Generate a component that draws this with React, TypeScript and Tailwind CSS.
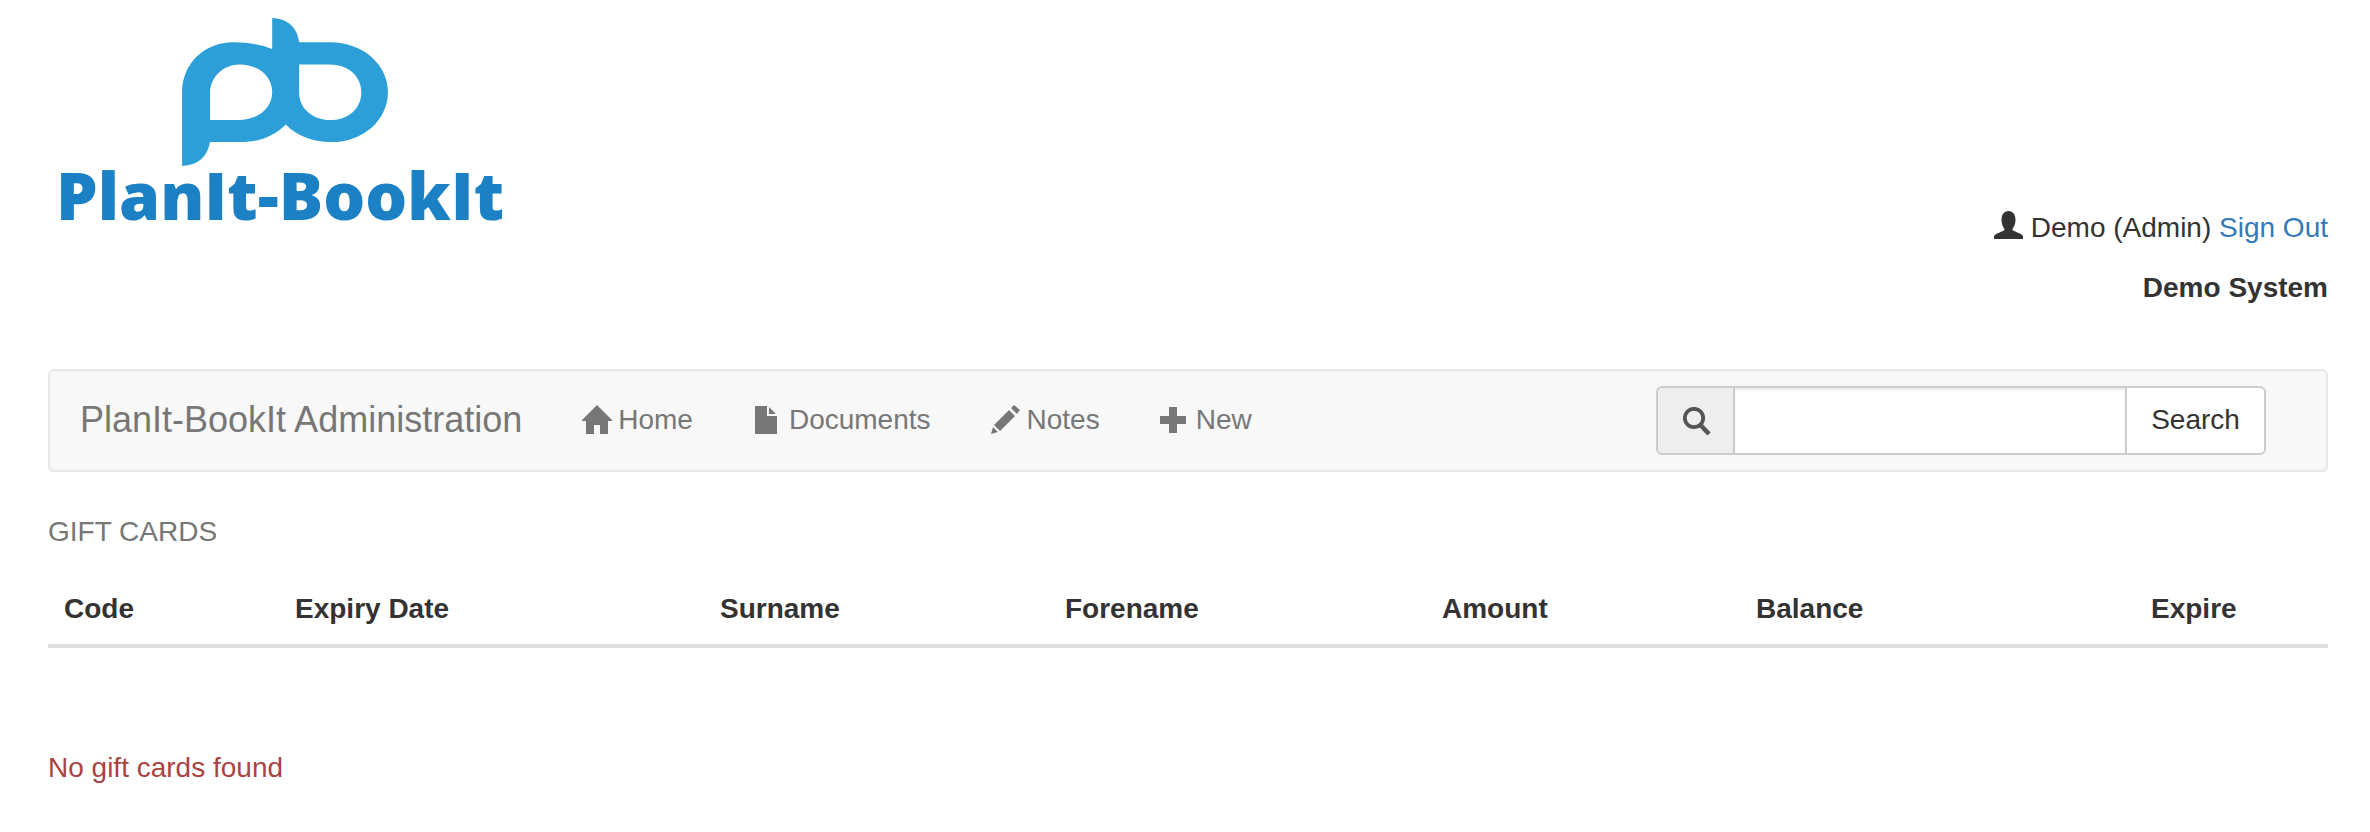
import React from "react";

const font = "font-['Liberation_Sans',Arial,sans-serif]";

function LogoMark() {
  return (
    <svg viewBox="456 55 619 445" className="block w-[206px] h-[148px]">
      <path
        fill="#2c9fd9"
        fillRule="evenodd"
        d="M727 55C775 57 803 85 808 128L900 128C1000 128 1075 195 1075 278C1075 362 1000 428 905 428C850 428 800 408 768 375C735 408 690 428 635 428L540 428C532 472 505 498 456 500L456 280C456 190 525 128 610 128C655 128 695 135 727 148ZM540 362L625 362C685 362 727 325 727 278C727 230 685 195 630 195C580 195 540 232 540 282ZM808 195L808 280C808 328 850 362 900 362C955 362 995 328 995 278C995 230 955 195 900 195Z"
      />
    </svg>
  );
}

function Logo() {
  return (
    <div className="flex flex-col items-start">
      <div className="ml-[134px] mt-[18px]">
        <LogoMark />
      </div>
      <div className="ml-[8px] -mt-[3px] h-[62px] text-[#1c80c4] text-[66px] leading-[62px] font-extrabold font-['Open_Sans',sans-serif] whitespace-nowrap">
        PlanIt-BookIt
      </div>
    </div>
  );
}

function UserIcon() {
  return (
    <svg viewBox="0 0 29 28" className="w-[29px] h-[28px] fill-[#333] inline-block align-[-2px]">
      <path d="M14.500 0C19 0 21.500 3.500 21.500 9C21.500 13 20 16 18.500 18L18.500 19C21 21 27 22 29 25L29 28L0 28L0 25C2 22 8 21 10.500 19L10.500 18C9 16 7.500 13 7.500 9C7.500 3.500 10 0 14.500 0Z" />
    </svg>
  );
}

function HomeIcon() {
  return (
    <svg viewBox="0 0 30 29" className="w-[30px] h-[29px] fill-[#777]">
      <path d="M15 0L30 15L30 16L26 16L26 29L18 29L18 20L12 20L12 29L4 29L4 16L0 16L0 15Z" />
    </svg>
  );
}

function DocIcon() {
  return (
    <svg viewBox="0 0 22 28" className="w-[22px] h-[28px] fill-[#777]">
      <path d="M0 0L12 0L12 10L22 10L22 28L0 28ZM14 1L21 8L14 8Z" />
    </svg>
  );
}

function PencilIcon() {
  return (
    <svg viewBox="0 0 29 29" className="w-[29px] h-[29px] fill-[#777]">
      <path d="M0 29L2 22L7 27ZM3 20L18 5L24 11L9 26ZM20 3L23 0L29 5L26 9Z" />
    </svg>
  );
}

function PlusIcon() {
  return (
    <svg viewBox="0 0 26 26" className="w-[26px] h-[26px] fill-[#777]">
      <path d="M9 0L17 0L17 9L26 9L26 17L17 17L17 26L9 26L9 17L0 17L0 9L9 9Z" />
    </svg>
  );
}

function SearchIcon() {
  return (
    <svg viewBox="0 0 28 28" className="w-[28px] h-[28px] ml-[3px]">
      <circle cx="11" cy="11" r="9.200" fill="none" stroke="#555" strokeWidth="3.800" />
      <path d="M17.500 18L26 27" stroke="#555" strokeWidth="4.500" />
    </svg>
  );
}

const navItems = [
  { label: "Home", icon: <HomeIcon />, gap: "gap-[6px] mr-[2px]" },
  { label: "Documents", icon: <DocIcon />, gap: "gap-[12px]" },
  { label: "Notes", icon: <PencilIcon />, gap: "gap-[7px]" },
  { label: "New", icon: <PlusIcon />, gap: "gap-[10px]" },
];

const columns = [
  { label: "Code", width: "w-[231px]" },
  { label: "Expiry Date", width: "w-[425px]" },
  { label: "Surname", width: "w-[345px]" },
  { label: "Forename", width: "w-[377px]" },
  { label: "Amount", width: "w-[314px]" },
  { label: "Balance", width: "w-[395px]" },
  { label: "Expire", width: "" },
];

export default function App() {
  return (
    <div className={`${font} bg-white h-[832px] pl-[48px] pr-[42px] text-[28px] text-[#333] overflow-hidden`}>
      <header className="flex justify-between h-[369px]">
        <Logo />
        <div className="flex flex-col items-end pt-[208px]">
          <div className="h-[40px] leading-[40px] whitespace-nowrap">
            <UserIcon /> Demo (Admin) <a className="text-[#337ab7]">Sign Out</a>
          </div>
          <div className="mt-[20px] h-[40px] leading-[40px] font-bold">Demo System</div>
        </div>
      </header>

      <nav className="flex items-center justify-between h-[103px] bg-[#f8f8f8] border-2 border-[#e7e7e7] rounded-[6px] pl-[30px] pr-[60px]">
        <div className="flex items-center pb-[2px]">
          <span className="text-[36px] text-[#777] whitespace-nowrap">PlanIt-BookIt Administration</span>
          <ul className="flex items-center ml-[60px] gap-[60px] text-[#777]">
            {navItems.map((item) => (
              <li key={item.label} className={`flex items-center ${item.gap}`}>
                {item.icon}
                {item.label}
              </li>
            ))}
          </ul>
        </div>
        <form className="flex h-[69px]">
          <span className="flex items-center justify-center w-[79px] bg-[#eee] border-2 border-[#ccc] rounded-l-[6px]">
            <SearchIcon />
          </span>
          <input className="w-[390px] bg-white border-y-2 border-[#ccc] outline-none shadow-[inset_0_2px_2px_rgba(0,0,0,0.075)]" />
          <button type="button" className="w-[141px] pb-[2px] bg-white border-2 border-[#ccc] rounded-r-[6px] text-[#333]">
            Search
          </button>
        </form>
      </nav>

      <h1 className="mt-[42px] h-[36px] leading-[36px] text-[#777] uppercase">Gift Cards</h1>

      <table className="mt-[24px] w-full border-b-[4px] border-[#ddd]">
        <thead>
          <tr className="h-[72px] font-bold text-left">
            {columns.map((col) => (
              <th key={col.label} className={`${col.width} pl-[16px] pb-[1px] font-bold`}>
                {col.label}
              </th>
            ))}
          </tr>
        </thead>
      </table>

      <p className="mt-[102px] h-[36px] leading-[36px] text-[#a94442]">No gift cards found</p>
    </div>
  );
}
